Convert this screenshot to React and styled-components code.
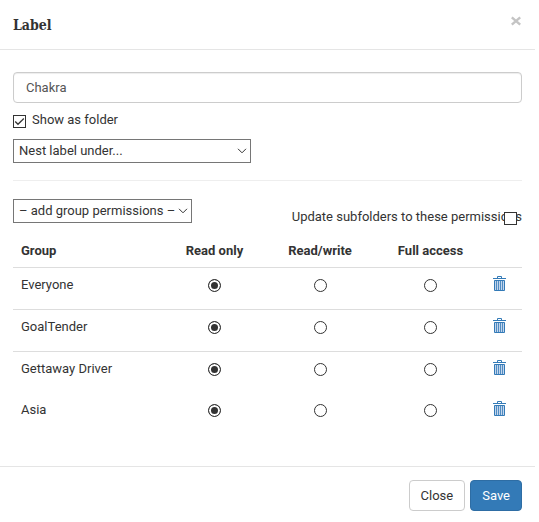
import React, { useState } from "react";
import styled, { createGlobalStyle } from "styled-components";

const GlobalStyle = createGlobalStyle`
  *, *::before, *::after { box-sizing: border-box; }
  body {
    margin: 0;
    background: #fff;
    color: #333;
    font-family: Roboto, "Noto Sans", sans-serif;
    font-size: 13px;
    line-height: 18px;
  }
  button, input, select { font: inherit; color: inherit; margin: 0; }
`;

const Dialog = styled.form`
  margin-right: 4px;
  background: #fff;
`;

const Header = styled.header`
  display: flex;
  justify-content: space-between;
  align-items: flex-start;
  height: 50px;
  padding: 12px 13px 0;
  border-bottom: 1px solid #e5e5e5;
`;

const Title = styled.h1`
  margin: 0;
  padding-top: 3px;
  font: bold 14px/20px "DejaVu Serif Condensed", "DejaVu Serif", serif;
`;

const CloseIcon = styled.button`
  display: flex;
  padding: 4px 1px;
  border: 0;
  background: none;
  color: #c4c4c4;
  cursor: pointer;
`;

const Body = styled.div`
  padding: 22px 13px 31px;
`;

const TextInput = styled.input`
  display: block;
  width: 100%;
  height: 31px;
  padding: 6px 12px;
  border: 1px solid #ccc;
  border-radius: 4px;
  background: #fff;
  box-shadow: inset 0 1px 1px rgba(0, 0, 0, 0.075);
  color: #555;
`;

const CheckRow = styled.div`
  display: flex;
  align-items: flex-start;
  gap: 6px;
  margin: 8px 0 10px;
`;

const CheckBox = styled.span`
  display: grid;
  width: 13px;
  height: 13px;
  margin-top: 4px;

  > * { grid-area: 1 / 1; }

  input {
    appearance: none;
    width: 13px;
    height: 13px;
    border: 1px solid #333;
    background: #fff;
  }

  svg {
    pointer-events: none;
    visibility: hidden;
  }

  input:checked + svg { visibility: visible; }
`;

const SelectBox = styled.div`
  display: grid;
  align-items: center;
  width: ${(p) => p.$width};
  max-width: 100%;

  > * { grid-area: 1 / 1; }

  select {
    appearance: none;
    width: 100%;
    height: 24px;
    padding: 0 14px 0 5px;
    border: 1px solid #767676;
    border-radius: 0;
    background: #fff;
  }

  svg {
    justify-self: end;
    margin-right: 4px;
    pointer-events: none;
  }
`;

const Divider = styled.hr`
  margin: 17px 0 18px;
  border: 0;
  border-top: 1px solid #eee;
`;

const PermissionBar = styled.div`
  display: flex;
  justify-content: space-between;
  align-items: flex-start;
  height: 36px;
`;

const Subfolders = styled.div`
  position: relative;
  padding-top: 9px;

  ${CheckBox} {
    position: absolute;
    right: 5px;
    bottom: 1px;
  }
`;

const Table = styled.table`
  width: 100%;
  border-collapse: collapse;
  table-layout: fixed;
`;

const Col = styled.col`
  width: ${(p) => p.$width};
`;

const HeadCell = styled.th`
  height: 32px;
  padding: 0 ${(p) => (p.$center ? "0" : "8px")};
  border-bottom: 1px solid #ddd;
  text-align: ${(p) => (p.$center ? "center" : "left")};
  font-weight: bold;
  white-space: nowrap;
`;

const Row = styled.tr`
  & + & > * { border-top: 1px solid #ddd; }
  &:last-child > * { border-top: 0; }
`;

const Cell = styled.td`
  height: 42px;
  padding: 8px ${(p) => (p.$center ? "0" : "8px")};
  text-align: ${(p) => (p.$center ? "center" : "left")};
  vertical-align: top;
`;

const Radio = styled.input`
  appearance: none;
  width: 13px;
  height: 13px;
  border: 1px solid #333;
  border-radius: 50%;
  background: #fff;
  vertical-align: -3px;

  &:checked {
    background: #333;
    box-shadow: inset 0 0 0 2px #fff;
  }
`;

const DeleteButton = styled.button`
  display: inline-flex;
  padding: 0;
  border: 0;
  background: none;
  color: #337ab7;
  vertical-align: top;
  cursor: pointer;
`;

const Footer = styled.footer`
  display: flex;
  justify-content: flex-end;
  gap: 5px;
  padding: 13px 13px 11px;
  border-top: 1px solid #e5e5e5;
`;

const Button = styled.button`
  height: 31px;
  padding: 0 11px;
  border: 1px solid ${(p) => (p.$primary ? "#2e6da4" : "#ccc")};
  border-radius: 4px;
  background: ${(p) => (p.$primary ? "#337ab7" : "#fff")};
  color: ${(p) => (p.$primary ? "#fff" : "#333")};
  cursor: pointer;
`;

const Chevron = () => (
  <svg width="10" height="6" viewBox="0 0 10 6" fill="none" stroke="#333" aria-hidden="true">
    <path d="M1 .8 5 4.8 9 .8" />
  </svg>
);

const Tick = () => (
  <svg width="13" height="13" viewBox="0 0 13 13" fill="none" stroke="#333" strokeWidth="1.3" aria-hidden="true">
    <path d="M2.2 6.5 5 9.3 10.8 3.5" />
  </svg>
);

const Cross = () => (
  <svg width="10" height="10" viewBox="0 0 10 10" fill="none" stroke="currentColor" strokeWidth="2.4" aria-hidden="true">
    <path d="M.8 1.3 9.2 8.7M9.2 1.3 .8 8.7" />
  </svg>
);

const Trash = () => (
  <svg width="13" height="15" viewBox="0 0 13 15" fill="none" stroke="currentColor" aria-hidden="true">
    <path d="M1.5 4h10v10.5h-10z" fill="#c3d5ec" stroke="none" />
    <path d="M4.5 2.5v-2h4v2" />
    <path d="M0 2.5h13" />
    <path d="M1.5 4.5h10v10h-10z" />
    <path d="M3.5 5v9M5.5 5v9M7.5 5v9M9.5 5v9" strokeWidth=".8" />
  </svg>
);

const groups = ["Everyone", "GoalTender", "Gettaway Driver", "Asia"];
const levels = ["Read only", "Read/write", "Full access"];

const Check = ({ id, ...rest }) => (
  <CheckBox>
    <input type="checkbox" id={id} {...rest} />
    <Tick />
  </CheckBox>
);

export default function App() {
  const [rows, setRows] = useState(groups);

  return (
    <>
      <GlobalStyle />
      <Dialog role="dialog" aria-labelledby="title" onSubmit={(e) => e.preventDefault()}>
        <Header>
          <Title id="title">Label</Title>
          <CloseIcon type="button" aria-label="Close dialog"><Cross /></CloseIcon>
        </Header>
        <Body>
          <TextInput aria-label="Label name" defaultValue="Chakra" />
          <CheckRow>
            <Check id="folder" defaultChecked />
            <label htmlFor="folder">Show as folder</label>
          </CheckRow>
          <SelectBox $width="238px">
            <select aria-label="Parent label"><option>Nest label under...</option></select>
            <Chevron />
          </SelectBox>
          <Divider />
          <PermissionBar>
            <SelectBox $width="179px">
              <select aria-label="Group to add"><option>– add group permissions –</option></select>
              <Chevron />
            </SelectBox>
            <Subfolders>
              <label htmlFor="subfolders">Update subfolders to these permissions</label>
              <Check id="subfolders" />
            </Subfolders>
          </PermissionBar>
          <Table>
            <colgroup>
              <Col />
              <Col $width="81px" />
              <Col $width="130px" />
              <Col $width="91px" />
              <Col $width="46px" />
            </colgroup>
            <thead>
              <tr>
                <HeadCell scope="col">Group</HeadCell>
                {levels.map((level) => <HeadCell key={level} scope="col" $center>{level}</HeadCell>)}
                <HeadCell as="td" />
              </tr>
            </thead>
            <tbody>
              {rows.map((group) => (
                <Row key={group}>
                  <Cell>{group}</Cell>
                  {levels.map((level, i) => (
                    <Cell key={level} $center>
                      <Radio type="radio" name={group} aria-label={`${group}: ${level}`} defaultChecked={i === 0} />
                    </Cell>
                  ))}
                  <Cell $center>
                    <DeleteButton
                      type="button"
                      aria-label={`Remove ${group}`}
                      onClick={() => setRows(rows.filter((r) => r !== group))}
                    >
                      <Trash />
                    </DeleteButton>
                  </Cell>
                </Row>
              ))}
            </tbody>
          </Table>
        </Body>
        <Footer>
          <Button type="button">Close</Button>
          <Button type="submit" $primary>Save</Button>
        </Footer>
      </Dialog>
    </>
  );
}
